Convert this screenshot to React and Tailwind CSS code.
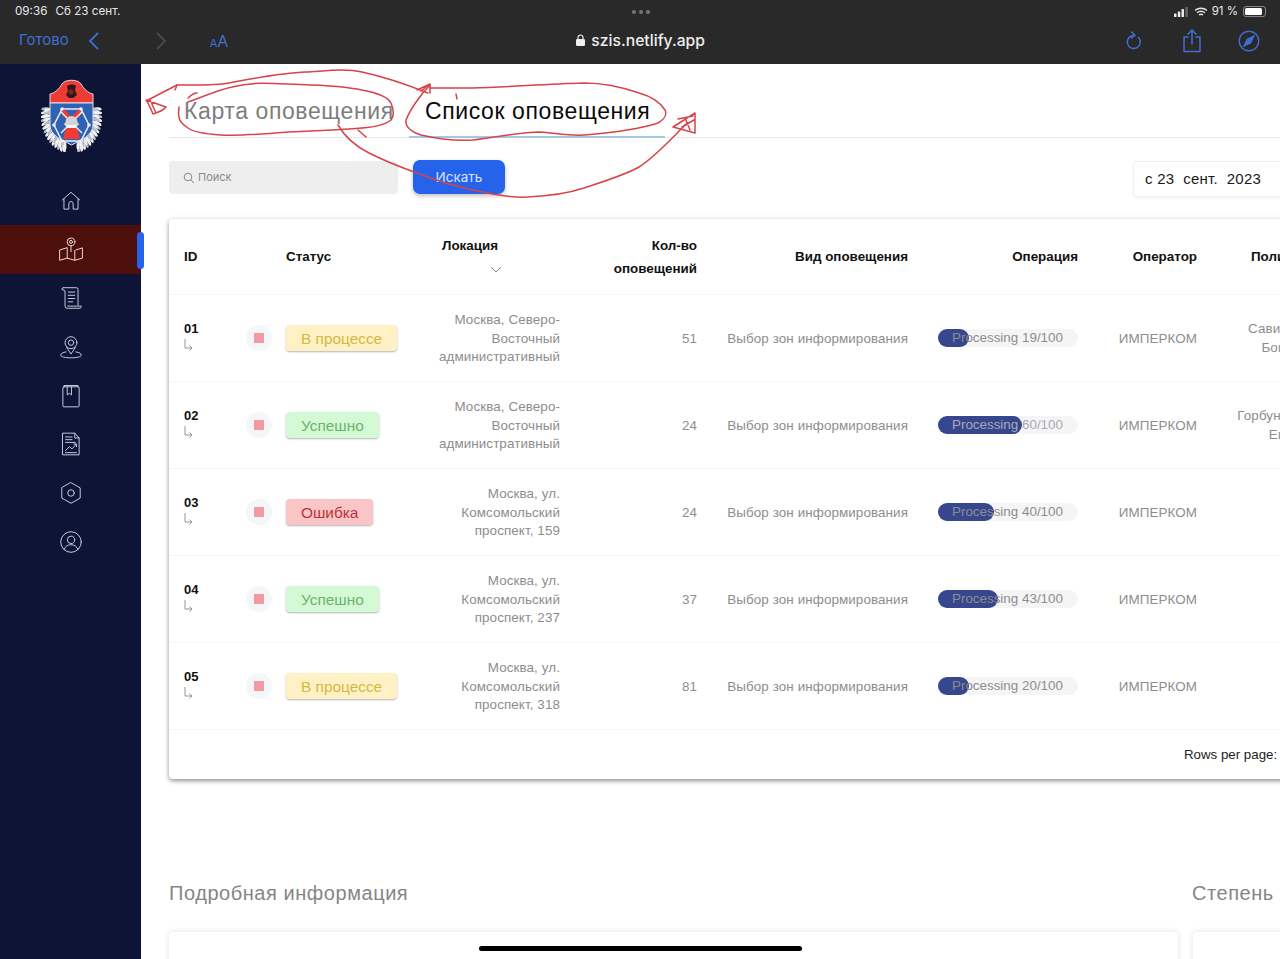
const GRID = "grid grid-cols-[77px_40px_144px_130px_137px_211px_170px_119px_123px]";
const SANS = "font-['Liberation_Sans',Arial,sans-serif]";

const rows = [
  { id: "01", status: "В процессе", tone: "y", loc: ["Москва, Северо-", "Восточный", "административный"], n: 51, p: 19, w: 31, who: ["Савинов И.", "Богданов"] },
  { id: "02", status: "Успешно", tone: "g", loc: ["Москва, Северо-", "Восточный", "административный"], n: 24, p: 60, w: 84, who: ["Горбунов Ив.", "Евгений"] },
  { id: "03", status: "Ошибка", tone: "r", loc: ["Москва, ул.", "Комсомольский", "проспект, 159"], n: 24, p: 40, w: 56, who: [] },
  { id: "04", status: "Успешно", tone: "g", loc: ["Москва, ул.", "Комсомольский", "проспект, 237"], n: 37, p: 43, w: 60, who: [] },
  { id: "05", status: "В процессе", tone: "y", loc: ["Москва, ул.", "Комсомольский", "проспект, 318"], n: 81, p: 20, w: 31, who: [] },
];

const tones = {
  y: "bg-[#fdf1c5] text-[#d6b93f]",
  g: "bg-[#d4fad5] text-[#6db36e]",
  r: "bg-[#f9c5c6] text-[#b8343a]",
};

function Ic({ children, active }) {
  return (
    <svg width="26" height="26" viewBox="0 0 24 24" fill="none" stroke={active ? "#f0dcd8" : "#c8cde2"} strokeWidth="0.900" strokeLinecap="round" strokeLinejoin="round">
      {children}
    </svg>
  );
}

const navIcons = [
  <><path d="M4 11 12 4l8 7" /><path d="M5.500 10v9.500h4.500v-5a2 2 0 0 1 4 0v5h4.500V10" /></>,
  <><circle cx="12" cy="4.500" r="3.600" /><circle cx="12" cy="4.500" r="1.400" /><path d="M12 8.100 12 13.500" /><path d="M8 10 1.500 12V21.500l7-2 7 2 7-2V10l-6 2" /><path d="M8.500 10V19.500M15.500 12.500v9" /></>,
  <><path d="M5 2.500h12a1.500 1.500 0 0 1 1.500 1.500V18.500" /><path d="M5 2.500a1.500 1.500 0 0 0-1.500 1.500L6.500 5.500V19.500a2 2 0 0 0 2 2h12a2 2 0 0 0 1-2h-12.500" /><path d="M9.500 6.500h6M9.500 9.500h6M9.500 12.500h6M9.500 15.500h4" /></>,
  <><circle cx="12" cy="8" r="5.500" /><circle cx="12" cy="8" r="2.500" /><path d="M8 12.500 12 18.500l4-6" /><path d="M7.500 16.500C4.500 17 2.500 18 2.500 19.500c0 1.500 4 2.500 9.500 2.500s9.500-1 9.500-2.500c0-1.500-2-2.500-5-3" /></>,
  <><rect x="4.500" y="3.500" width="15" height="18.500" rx="1" /><path d="M5.500 3.500V2.300h13V3.500" /><path d="M8.500 3.500v7.500l2-1.500 2 1.500V3.500" /></>,
  <><path d="M4.500 2h11l4 4.500V22h-15z" /><path d="M15.500 2v4.500h4" /><path d="M7 5.500h6M7 8h6M7 10.500h9" /><path d="M7 18l3.500-3.500 2.500 2 4-4.500" /><path d="M14.500 12h2.500v2.500" /><path d="M7 20h10" /></>,
  <><path d="M12 2.500 20.500 7.300v9.400L12 21.500 3.500 16.700V7.300z" /><circle cx="12" cy="12" r="3" /></>,
  <><circle cx="12" cy="12" r="9.500" /><circle cx="12" cy="10" r="3.400" /><path d="M5.500 19c1-3 3.500-4.500 6.500-4.500s5.500 1.500 6.500 4.500" /></>,
];

function Crest() {
  const leaves = [];
  for (let i = 0; i < 15; i++) {
    const t = i / 14;
    const a = -0.25 + t * 1.55;
    const rx = 27;
    const ry = 33;
    const cy = 38;
    for (const k of [1, 0.9]) {
      const dx = rx * k * Math.cos(a);
      const y = cy + ry * k * Math.sin(a);
      const rot = (a * 180) / Math.PI;
      leaves.push([30.500 - dx, y, -rot - 20], [30.500 + dx, y, rot + 20]);
    }
  }
  return (
    <svg width="61" height="73" viewBox="0 0 61 73">
      {leaves.map(([x, y, r], i) => (
        <ellipse key={i} cx={x} cy={y} rx="4" ry="1.500" fill={i % 3 === 0 ? "#b9bcc8" : "#f1f1f3"} transform={`rotate(${r} ${x} ${y})`} />
      ))}
      <path d="M9 24V15c5-1 9-5 12-10 3-5 16-5 19 0 3 5 7 9 12 10v9z" fill="#ee3b33" stroke="#dcdce0" strokeWidth="1" />
      <path d="M9 24h43v22c0 10-11 15-21.500 20C20 61 9 56 9 46z" fill="#2f62b4" stroke="#e4e4e8" strokeWidth="1" />
      <path d="M26 7c3-2 7-2 9 0l-1 4 2 5-4 3h-4l-3-3 2-4z" fill="#2a1a1a" />
      <circle cx="30" cy="13" r="2.500" fill="#8c2020" />
      <path d="M13 46l8-16h19l8 16-8 16H21z" fill="none" stroke="#eef0f6" strokeWidth="1.500" />
      <path d="M23 30l7.500 8 7.500-8 3 4-7 8 5 18H22l5-18-7-8z" fill="#ef3d36" />
      <path d="M20 33l21 21M41 33 20 54" stroke="#eef0f6" strokeWidth="1.400" />
      <path d="M24.500 43a6 6 0 0 1 12 0l2 3h-16z" fill="#d4d4d6" />
      <path d="M24 46h13l-2.500 3h-8z" fill="#f8f8f8" />
      <circle cx="13" cy="46" r="1.800" fill="#eef0f6" /><circle cx="48" cy="46" r="1.800" fill="#eef0f6" />
      <circle cx="21" cy="30" r="1.800" fill="#eef0f6" /><circle cx="40" cy="30" r="1.800" fill="#eef0f6" />
      <circle cx="21" cy="62" r="1.800" fill="#eef0f6" /><circle cx="40" cy="62" r="1.800" fill="#eef0f6" />
    </svg>
  );
}

function Scribbles() {
  const s = { fill: "none", stroke: "#d8424a", strokeWidth: 1.500, strokeLinecap: "round", strokeLinejoin: "round" };
  return (
    <svg className="absolute left-0 top-0 pointer-events-none" width="1280" height="959" viewBox="0 0 1280 959">
      <path {...s} d="M188 102C205 96 218 90 232 87 252 82 268 83 288 84 315 85 340 85 362 90 378 93 388 97 391 103 394 110 394 116 391 120 385 125 375 127 362 128 340 130 315 131 288 132 265 134 240 136 221 135 205 134 193 132 188 128 182 124 179 121 179 117 178 113 179 110 179 107" />
      <path {...s} d="M188 98C191 95 194 93 197 93" />
      <path {...s} d="M148 100 177 85C195 85 212 86 229 83 255 78 280 73 306 72 325 71 345 68 362 72 385 77 408 85 428 93" />
      <path {...s} d="M146 100 166 107C164 110 159 112 153 114 151 109 149 104 146 100M150 100 156 113" />
      <path {...s} d="M177 85 175 90M417 90 430 84 430 93M421 91 430 84" />
      <path {...s} d="M430 85C420 95 410 110 406 120 405 127 412 132 421 135 438 139 455 141 473 140 495 138 518 132 540 132 555 133 570 136 584 135 610 133 640 129 658 123 665 119 667 114 665 110 660 102 650 96 639 93 622 87 603 83 584 83 545 84 510 87 473 88 458 88 444 88 430 88" />
      <path {...s} d="M338 125C345 137 355 146 369 153 385 161 400 167 417 173 435 180 453 186 473 190 492 194 510 198 528 197 548 196 566 194 584 188 605 181 625 175 639 167 655 157 672 138 687 123" />
      <path {...s} d="M695 113 673 127 695 133 695 113M678 119 693 116M682 127 694 120M690 130 686 120" />
      <path {...s} d="M358 130 366 137" />
      <path {...s} d="M456 94 457 99" />
    </svg>
  );
}

export default function App() {
  return (
    <div className={`relative w-[1280px] h-[959px] overflow-hidden flex flex-col bg-white ${SANS}`}>
      {/* Safari bar */}
      <header className="h-16 shrink-0 bg-[#292929] flex flex-col font-['Inter',sans-serif]">
        <div className="h-[23px] grid grid-cols-3 items-center pl-[15px] pr-[14px] text-[11.700px] text-[#e8e8e8]">
          <div className="flex gap-[8px]"><span>09:36</span><span>Сб 23 сент.</span></div>
          <div className="flex gap-[3px] justify-center">
            <span className="w-[4px] h-[4px] rounded-full bg-[#777]" />
            <span className="w-[4px] h-[4px] rounded-full bg-[#777]" />
            <span className="w-[4px] h-[4px] rounded-full bg-[#777]" />
          </div>
          <div className="flex items-center justify-end gap-[5px]">
            <svg width="15" height="10" viewBox="0 0 15 10" fill="#e8e8e8"><rect x="0" y="6.500" width="2.500" height="3.500" rx=".5" /><rect x="3.800" y="4.500" width="2.500" height="5.500" rx=".5" /><rect x="7.500" y="2" width="2.500" height="8" rx=".5" /><rect x="11.300" y="0" width="2.500" height="10" rx=".5" fill="#666" /></svg>
            <svg width="14" height="10" viewBox="0 0 14 10" fill="none" stroke="#e8e8e8" strokeWidth="1.400"><path d="M1 3.500c3.500-3 8.500-3 12 0M3 5.800c2.500-2 5.500-2 8 0M5 8c1.200-.9 2.800-.9 4 0" /></svg>
            <span className="-ml-[1px] text-[11.500px]">91 %</span>
            <div className="w-[23px] h-[11px] rounded-[3px] border border-[#888] p-[1px]"><div className="h-full w-[90%] rounded-[1.500px] bg-white" /></div>
          </div>
        </div>
        <div className="h-[35px] flex items-center relative">
          <span className="ml-[19px] text-[15px] text-[#3f6fd0]">Готово</span>
          <svg className="ml-[18px]" width="14" height="20" viewBox="0 0 14 20" fill="none" stroke="#3f6fd0" strokeWidth="1.800"><path d="M11 2 3 10l8 8" /></svg>
          <svg className="ml-[53px]" width="14" height="20" viewBox="0 0 14 20" fill="none" stroke="#4a4a4a" strokeWidth="1.800"><path d="M3 2l8 8-8 8" /></svg>
          <span className="ml-[42px] text-[#3f6fd0] flex items-baseline"><span className="text-[11px]">A</span><span className="text-[16px]">A</span></span>
          <div className="ml-[348px] flex items-center gap-[6px] text-[15.700px] font-medium text-[#eeeeee]">
            <svg width="9" height="12" viewBox="0 0 9 12" fill="#eee"><rect x="0" y="5" width="9" height="7" rx="1.300" /><path d="M2 5.500V3.500a2.500 2.500 0 0 1 5 0v2" fill="none" stroke="#eee" strokeWidth="1.200" /></svg>
            szis.netlify.app
          </div>
          <div className="ml-auto mr-[20px] flex items-center gap-[36px]">
            <svg className="mr-[2px]" width="20" height="22" viewBox="0 0 20 22" fill="none" stroke="#3f6fd0" strokeWidth="1.400" strokeLinecap="round"><path d="M14.500 7.500A6.500 6.500 0 1 1 9.500 5.500" /><path d="M7.500 2 11 5.300 7.500 8" /></svg>
            <svg width="20" height="24" viewBox="0 0 20 24" fill="none" stroke="#3f6fd0" strokeWidth="1.500" strokeLinecap="round" strokeLinejoin="round"><path d="M6 8H2v14.500h16V8h-4" /><path d="M10 15V1.500M6 5l4-4 4 4" /></svg>
            <svg width="22" height="22" viewBox="0 0 22 22" fill="none" stroke="#3f6fd0" strokeWidth="1.400"><circle cx="11" cy="11" r="9.800" /><path d="M16 6l-3.300 6.700L6 16l3.300-6.700z" fill="#3f6fd0" /></svg>
          </div>
        </div>
      </header>

      <div className="flex flex-1 min-h-0">
        {/* Sidebar */}
        <aside className="relative w-[141px] shrink-0 bg-[#0e1435]">
          <div className="h-[112.700px] flex justify-center pt-[15px] pl-[2px]"><Crest /></div>
          {navIcons.map((ic, i) => (
            <div key={i} className={`h-[48.700px] flex items-center justify-center ${i === 1 ? "bg-[#4c0f0c]" : ""}`}>
              <Ic active={i === 1}>{ic}</Ic>
            </div>
          ))}
          <div className="absolute left-[137px] top-[168px] w-[7px] h-[37px] rounded-full bg-[#2563eb]" />
        </aside>

        {/* Main */}
        <main className="flex-1 min-w-0 overflow-hidden pl-[28px]">
          <div className="w-[1250px]">
            <div className="h-[74px] border-b border-[#e5e7eb] flex text-[23px] tracking-[0.600px]">
              <div className="w-[240px] pl-[15px] pt-[31px] text-[#7d7d7d] leading-[32px]">Карта оповещения</div>
              <div className="w-[256px] pl-[16px] pt-[31px] text-[#0a0a0a] leading-[32px] h-[74px] border-b-2 border-[#a6c8e6]">Список оповещения</div>
            </div>

            <div className="mt-[23px] w-[1164px] flex items-start justify-between">
              <div className="flex items-start gap-[15px]">
                <div className="w-[229px] h-[33px] bg-[#eeeeee] rounded-[4px] flex items-center pl-[14px] gap-[3px] text-[11px] text-[#8b8b8b] font-['Inter',sans-serif]">
                  <svg width="12" height="12" viewBox="0 0 12 12" fill="none" stroke="#858585" strokeWidth="1"><circle cx="5" cy="5" r="3.800" /><path d="M8 8l3 3" /></svg>
                  Поиск
                </div>
                <button className="w-[92px] h-[34px] -mt-[1px] bg-[#2563eb] rounded-[7px] text-[13.500px] text-[#dbe6ff] shadow-[0_2px_4px_rgba(0,0,0,0.25)] font-['Inter',sans-serif]">Искать</button>
              </div>
              <div className="w-[200px] h-[36px] rounded-[4px] border border-[#f1f1f1] shadow-[0_1px_2px_rgba(0,0,0,0.05)] pl-[11px] flex items-center text-[15px] tracking-[0.250px] text-[#1a1a1a] whitespace-pre">с 23  сент.  2023</div>
            </div>

            {/* Table card */}
            <div className="mt-[22px] w-[1200px] h-[560px] bg-white rounded-[4px] shadow-[0_2px_4px_rgba(0,0,0,0.4),0_0_8px_rgba(0,0,0,0.06)]">
              <div className={`${GRID} h-[76px] border-b border-[#f6f6f6] items-center text-[13.400px] font-bold text-[#111] leading-[23px]`}>
                <div className="pl-[15px]">ID</div>
                <div />
                <div>Статус</div>
                <div className="h-[46px] flex flex-col items-end pr-[62px] whitespace-nowrap">
                  <span>Локация</span>
                  <svg className="mt-[9px] -mr-[4px]" width="12" height="7" viewBox="0 0 12 7" fill="none" stroke="#777" strokeWidth="0.900"><path d="M1 1l5 5 5-5" /></svg>
                </div>
                <div className="text-right">Кол-во<br />оповещений</div>
                <div className="text-right">Вид оповещения</div>
                <div className="text-right">Операция</div>
                <div className="text-right">Оператор</div>
                <div className="whitespace-nowrap pl-[54px]">Полигон</div>
              </div>

              {rows.map((r) => (
                <div key={r.id} className={`${GRID} h-[87px] pt-[2px] border-b border-[#f6f6f6] items-center text-[13.400px] text-[#8d8d8d] tracking-[0.100px]`}>
                  <div className="pl-[15px] -mt-[7px]">
                    <div className="text-[13px] font-bold text-[#111] leading-[18px] tracking-normal">{r.id}</div>
                    <svg className="ml-[-1px]" width="11" height="13" viewBox="0 0 11 13" fill="none" stroke="#8a8a8a" strokeWidth="0.900"><path d="M2 1v9h7M6.500 7.500 9 10l-2.500 2.500" /></svg>
                  </div>
                  <div className="-mt-[2px]"><div className="w-[26px] h-[26px] rounded-full bg-[#f5f6f8] flex items-center justify-center"><div className="w-[10px] h-[10px] bg-[#f29aa2]" /></div></div>
                  <div className="-mt-[2px]"><span className={`inline-block h-[26px] leading-[27px] px-[15px] rounded-[4px] text-[15.400px] tracking-normal shadow-[0_1px_2px_rgba(0,0,0,0.3)] ${tones[r.tone]}`}>{r.status}</span></div>
                  <div className="text-right leading-[18.700px] whitespace-nowrap">{r.loc.map((l) => <div key={l}>{l}</div>)}</div>
                  <div className="text-right">{r.n}</div>
                  <div className="text-right whitespace-nowrap">Выбор зон информирования</div>
                  <div className="flex justify-end -mt-[2px]">
                    <div className="relative w-[140px] h-[18px] rounded-full bg-[#f5f5f5]">
                      <div className="h-[18px] rounded-full bg-[#37478f]" style={{ width: r.w }} />
                      <span className={`absolute left-[14px] top-0 text-[13.400px] leading-[18px] tracking-normal whitespace-nowrap ${r.p === 60 ? "text-[#a9a9b4]" : "text-[#8d8d8d]"}`}>Processing {r.p}/100</span>
                    </div>
                  </div>
                  <div className="text-right">ИМПЕРКОМ</div>
                  <div className="text-right leading-[18.700px] whitespace-nowrap">{r.who.map((l) => <div key={l}>{l}</div>)}</div>
                </div>
              ))}

              <div className="h-[48px] pl-[1015px] pt-[15px] text-[13.300px] text-[#222] leading-[20px] whitespace-nowrap">Rows per page:</div>
            </div>

            {/* Lower section */}
            <div className="mt-[101px] flex text-[20px] text-[#858585] leading-[26px] tracking-[0.550px]">
              <div className="w-[1023px]">Подробная информация</div>
              <div>Степень</div>
            </div>
            <div className="mt-[26px] flex gap-[15px]">
              <div className="w-[1009px] h-[60px] bg-white rounded-[4px] shadow-[0_0_6px_rgba(0,0,0,0.12)]" />
              <div className="w-[200px] h-[60px] bg-white rounded-[4px] shadow-[0_0_6px_rgba(0,0,0,0.12)]" />
            </div>
          </div>
        </main>
      </div>

      <Scribbles />
      <div className="absolute left-[479px] top-[946px] w-[323px] h-[5px] rounded-full bg-black" />
    </div>
  );
}
